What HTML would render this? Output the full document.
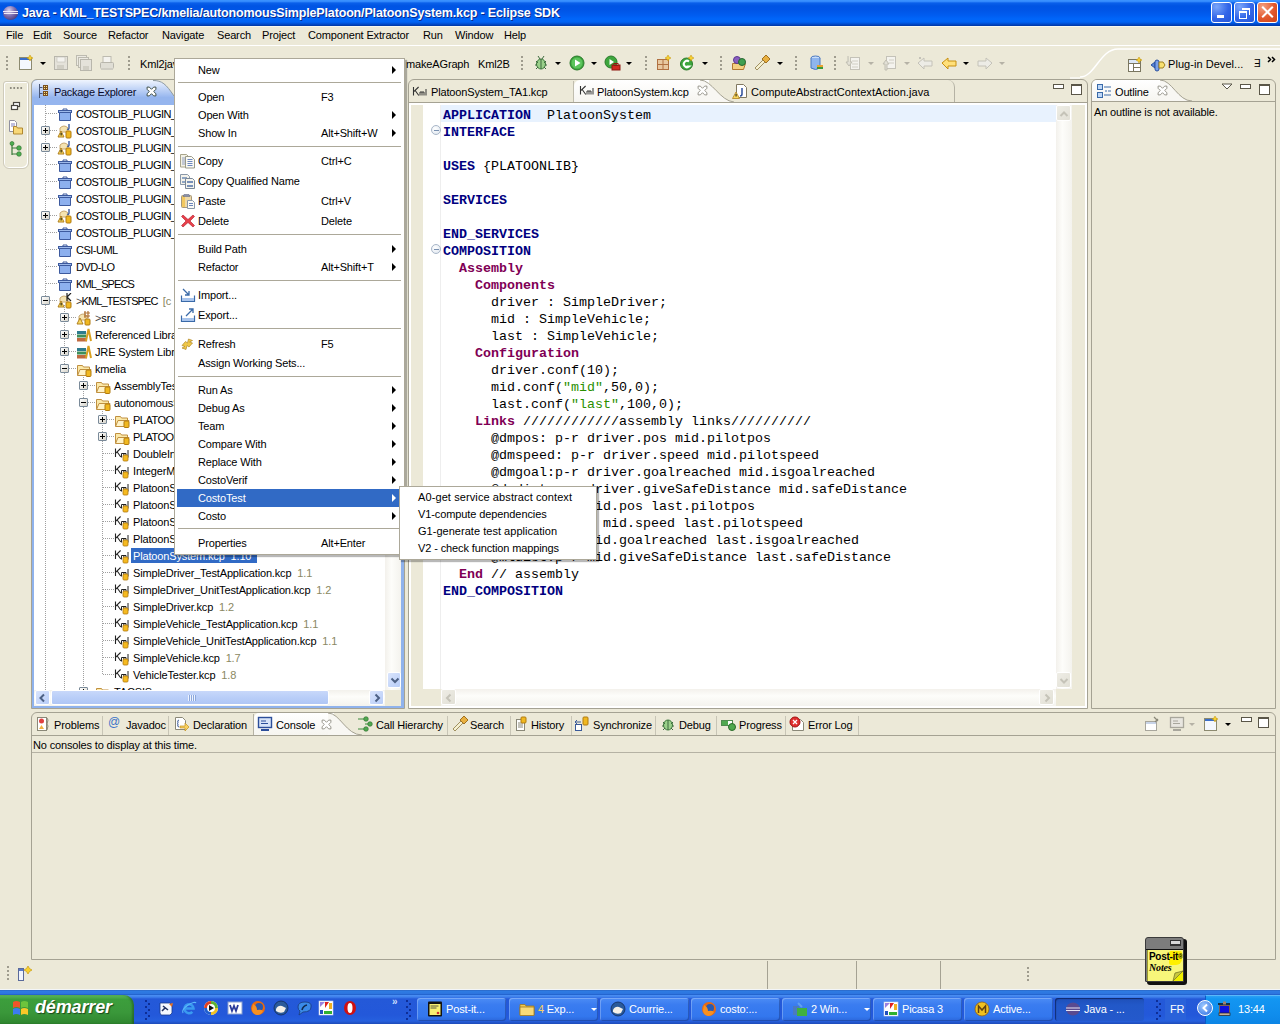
<!DOCTYPE html><html><head><meta charset="utf-8"><style>
*{margin:0;padding:0;box-sizing:border-box}
html,body{width:1280px;height:1024px;overflow:hidden;background:#ECE9D8;font-family:"Liberation Sans",sans-serif;font-size:11px;color:#000;position:relative}
.a{position:absolute}
.t{position:absolute;white-space:nowrap;line-height:13px;letter-spacing:-0.15px}
svg{position:absolute;overflow:visible}
.grip{position:absolute;width:2px;height:15px;background:repeating-linear-gradient(#9F9C8E 0 2px,transparent 2px 4px)}
.dd{position:absolute;width:0;height:0;border-left:3px solid transparent;border-right:3px solid transparent;border-top:3px solid #000}
.ddg{border-top-color:#B5B2A6}
.code{font-family:"Liberation Mono",monospace;font-size:13.33px;line-height:17px;position:absolute;white-space:pre;left:443px}
.kw{color:#00007F;font-weight:bold}
.k2{color:#7F0055;font-weight:bold}
.st{color:#2A8F00}
.menu{position:absolute;background:#fff;border:1px solid #ACA899;box-shadow:2px 2px 1px rgba(0,0,0,.28)}
.sep{position:absolute;height:1px;background:#ACA899}
.arr{position:absolute;width:0;height:0;border-top:4px solid transparent;border-bottom:4px solid transparent;border-left:4px solid #000}
.tb{position:absolute;top:998px;height:23px;width:89px;border-radius:3px;background:linear-gradient(#4C8CF5,#3A7CF0 30%,#3377EE 80%,#2C66DA);box-shadow:inset 1px 1px 0 rgba(255,255,255,.25),inset -1px -1px 0 rgba(0,0,40,.25);color:#fff}
.tb .t{top:5px}
.dots{position:absolute;background-image:radial-gradient(circle,#8F8C80 0.8px,transparent 1px);background-size:2px 2px}
.vd{position:absolute;width:1px;background:repeating-linear-gradient(#A0A0A0 0 1px,transparent 1px 2px)}
.hd{position:absolute;height:1px;background:repeating-linear-gradient(90deg,#A0A0A0 0 1px,transparent 1px 2px)}
.exp{position:absolute;width:9px;height:9px;border:1px solid #7A8A99;border-radius:1px;background:linear-gradient(135deg,#fff,#D6D3C9)}
.exp:before{content:"";position:absolute;left:1px;top:3px;width:5px;height:1px;background:#000}
.exp.p:after{content:"";position:absolute;left:3px;top:1px;width:1px;height:5px;background:#000}
.ver{color:#8A8862;margin-left:3px}
.closex{position:absolute;width:10px;height:10px}
</style></head><body>
<svg width="0" height="0" style="position:absolute"><defs>
<symbol id="ifold" viewBox="0 0 16 16"><rect x="1.5" y="4.5" width="13" height="2" fill="#9DB9EA" stroke="#3D5A9E"/><path d="M2.5 6.5h11v8h-11z" fill="#8DB0EE" stroke="#3D5A9E"/><path d="M6 4.5v-1.5h4v1.5" fill="none" stroke="#3D5A9E"/></symbol>
<symbol id="iproj" viewBox="0 0 16 16"><path d="M3 5 Q7 1 11 5 v4 h-8z" fill="#F5E3B0" stroke="#C8A870"/><path d="M12 1v4q0 2-2 1" fill="none" stroke="#2C4E9A" stroke-width="1.3"/><path d="M1 14 L4 8 L7 14z" fill="#F8D860" stroke="#B08020"/><rect x="3.6" y="10" width="1" height="2.5" fill="#000"/><rect x="9" y="8" width="5" height="7" rx="1" fill="#F0B820" stroke="#B07A10"/></symbol>
<symbol id="iprojk" viewBox="0 0 16 16"><path d="M3 5 Q7 1 11 5 v4 h-8z" fill="#F5E3B0" stroke="#C8A870"/><path d="M10 0v8M10 4l4-4M10 4l4 4" fill="none" stroke="#222" stroke-width="1.2"/><path d="M1 14 L4 8 L7 14z" fill="#F8D860" stroke="#B08020"/><rect x="3.6" y="10" width="1" height="2.5" fill="#000"/><rect x="9" y="9" width="5" height="6" rx="1" fill="#F0B820" stroke="#B07A10"/></symbol>
<symbol id="isrc" viewBox="0 0 16 16"><path d="M3 6 Q7 2 11 6 v4 h-8z" fill="#F5E3B0" stroke="#C8A870"/><path d="M9 1v7M12 1v7M8 3h6M8 6h6" stroke="#B07030" stroke-width="1.2"/><path d="M1 14 L4 8 L7 14z" fill="#F8D860" stroke="#B08020"/><rect x="9" y="9" width="5" height="6" rx="1" fill="#F0B820" stroke="#B07A10"/></symbol>
<symbol id="ilib" viewBox="0 0 16 16"><rect x="1" y="4" width="9" height="3" fill="#2E7C8E"/><rect x="1" y="7.5" width="9" height="3" fill="#3F8F5A"/><rect x="1" y="11" width="10" height="3.5" fill="#C06A40"/><path d="M10 14 L12.5 2 L15 14" fill="none" stroke="#D8A020" stroke-width="2"/></symbol>
<symbol id="iopen" viewBox="0 0 16 16"><path d="M1.5 4.5h5l1 1.5h6v8h-12z" fill="#FBE8A8" stroke="#C09040"/><path d="M1.5 14.5 L4 8.5h11l-2.5 6z" fill="#FFF3C8" stroke="#C09040"/><rect x="10" y="9" width="5" height="6.5" rx="1" fill="#F0B820" stroke="#B07A10"/></symbol>
<symbol id="ikml" viewBox="0 0 16 16"><path d="M1.5 2.5v8.5M1.8 7.2l4.8-4.7M3.2 6l3.6 5" fill="none" stroke="#222" stroke-width="1.1"/><path d="M7.5 11.5V7.5h4.5v4M9.8 7.5v4" fill="none" stroke="#222" stroke-width="1"/><path d="M14 4v7.5" stroke="#222" stroke-width="1"/><rect x="9" y="9" width="5" height="6" rx="1" fill="#F5BA20" stroke="#B07A10" stroke-width=".8"/></symbol>
<symbol id="ikmltab" viewBox="0 0 16 16"><path d="M1.5 3v8.5M1.8 7.7l4.8-4.7M3.2 6.5l3.6 5" fill="none" stroke="#333" stroke-width="1.1"/><path d="M8 11.5V8h4v3.5M10 8v3.5" fill="none" stroke="#333" stroke-width="1"/><path d="M14 5v6.5" stroke="#333" stroke-width="1"/></symbol>
<symbol id="ix" viewBox="0 0 10 10"><path d="M1 1h2l2 2 2-2h2v2l-2 2 2 2v2h-2l-2-2-2 2h-2v-2l2-2-2-2z" fill="#fff" stroke="#8C8A80" stroke-width="0.8"/></symbol>
</defs></svg>
<div class="a" style="left:0;top:0;width:1280px;height:26px;background:linear-gradient(#3D95FF 0,#3289FC 1.5px,#0A60EA 3px,#0054E3 6px,#0056E8 11px,#005CF0 15px,#0066FA 19px,#0063F4 22px,#004CCF 24px,#0036A2 26px)">
<div class="a" style="left:3px;top:6px;width:15px;height:14px;border-radius:50%;background:radial-gradient(circle at 40% 30%,#D6D0EE,#7A6BB0 45%,#3A2C6A 90%)"></div>
<div class="a" style="left:3px;top:11px;width:15px;height:1px;background:#EEEAF8"></div>
<div class="a" style="left:4px;top:13px;width:14px;height:1px;background:#EEEAF8"></div>
<div class="t" style="left:22px;top:5px;color:#fff;font-weight:bold;font-size:12.5px;line-height:17px;text-shadow:1px 1px 0 #0B2A8A">Java - KML_TESTSPEC/kmelia/autonomousSimplePlatoon/PlatoonSystem.kcp - Eclipse SDK</div>
<div class="a" style="left:1211px;top:2px;width:21px;height:21px;border:1px solid #fff;border-radius:3px;background:radial-gradient(circle at 25% 20%,#7AA6FA,#3366E8 55%,#2556D8)"><div class="a" style="left:5px;top:12px;width:7px;height:3px;background:#fff"></div></div>
<div class="a" style="left:1234px;top:2px;width:21px;height:21px;border:1px solid #fff;border-radius:3px;background:radial-gradient(circle at 25% 20%,#7AA6FA,#3366E8 55%,#2556D8)"><div class="a" style="left:4px;top:8px;width:8px;height:8px;border:1px solid #fff;border-top-width:2px"></div><div class="a" style="left:7px;top:5px;width:8px;height:7px;border-top:2px solid #fff;border-right:1px solid #fff"></div></div>
<div class="a" style="left:1257px;top:2px;width:21px;height:21px;border:1px solid #fff;border-radius:3px;background:radial-gradient(circle at 25% 20%,#F2A080,#E2582C 55%,#CC4418)"><div class="a" style="left:2px;top:8px;width:15px;height:2px;background:#fff;transform:rotate(45deg)"></div><div class="a" style="left:2px;top:8px;width:15px;height:2px;background:#fff;transform:rotate(-45deg)"></div></div>
</div>
<div class="a" style="left:0;top:45px;width:1280px;height:1px;background:#fff"></div><div class="a" style="left:0;top:26px;width:1280px;height:1px;background:#F6F8F0"></div>
<div class="t" style="left:6px;top:29px">File</div>
<div class="t" style="left:33px;top:29px">Edit</div>
<div class="t" style="left:63px;top:29px">Source</div>
<div class="t" style="left:108px;top:29px">Refactor</div>
<div class="t" style="left:162px;top:29px">Navigate</div>
<div class="t" style="left:217px;top:29px">Search</div>
<div class="t" style="left:262px;top:29px">Project</div>
<div class="t" style="left:308px;top:29px">Component Extractor</div>
<div class="t" style="left:423px;top:29px">Run</div>
<div class="t" style="left:455px;top:29px">Window</div>
<div class="t" style="left:504px;top:29px">Help</div>
<div class="grip" style="left:6px;top:56px"></div>
<svg style="left:18px;top:55px" width="16" height="16" viewBox="0 0 16 16"><rect x="1.5" y="2.5" width="12" height="12" fill="#F4F8FE" stroke="#8C8A70"/><rect x="2" y="3" width="11" height="2" fill="#3A6EC8"/><path d="M12 0l1 2 2 1-2 1-1 2-1-2-2-1 2-1z" fill="#F8D030" stroke="#C09000" stroke-width=".5"/></svg>
<div class="dd" style="left:40px;top:62px"></div>
<svg style="left:53px;top:55px" width="16" height="16" viewBox="0 0 16 16"><rect x="1.5" y="1.5" width="13" height="13" fill="#E4E2DA" stroke="#B8B6AC"/><rect x="4" y="2" width="8" height="5" fill="#F4F3EF" stroke="#C0BEB4" stroke-width=".6"/><rect x="4" y="10" width="7" height="4" fill="#D0CEC4"/></svg>
<svg style="left:76px;top:55px" width="16" height="16" viewBox="0 0 16 16"><rect x="0.5" y="0.5" width="10" height="10" fill="#ECEAE2" stroke="#BDBBB0"/><rect x="2.5" y="2.5" width="10" height="10" fill="#ECEAE2" stroke="#BDBBB0"/><rect x="4.5" y="4.5" width="11" height="11" fill="#E4E2DA" stroke="#B8B6AC"/><rect x="7" y="11" width="6" height="4" fill="#D0CEC4"/></svg>
<svg style="left:99px;top:55px" width="16" height="16" viewBox="0 0 16 16"><rect x="4" y="1.5" width="8" height="6" fill="#F4F3EF" stroke="#BDBBB0"/><rect x="1.5" y="7.5" width="13" height="6" rx="1" fill="#E0DED5" stroke="#B8B6AC"/><rect x="2" y="13" width="12" height="2" fill="#CFCDC3"/></svg>
<div class="grip" style="left:128px;top:56px"></div>
<div class="t" style="left:140px;top:58px">Kml2java</div>
<div class="t" style="left:406px;top:58px">makeAGraph</div>
<div class="t" style="left:478px;top:58px">Kml2B</div>
<div class="grip" style="left:521px;top:56px"></div>
<svg style="left:533px;top:55px" width="16" height="16" viewBox="0 0 16 16"><ellipse cx="8" cy="9" rx="4.5" ry="5" fill="#9AD08A" stroke="#3E7A3E"/><path d="M8 4v10M3 6l2 2M13 6l-2 2M2 10h2M12 10h2M3 14l2-2M13 14l-2-2M5 1l2 3M11 1l-2 3" stroke="#3E6A3E" stroke-width="1"/></svg>
<div class="dd" style="left:555px;top:62px"></div>
<svg style="left:569px;top:55px" width="16" height="16" viewBox="0 0 16 16"><circle cx="8" cy="8" r="7" fill="#3DA63D" stroke="#2A7A2A"/><circle cx="8" cy="8" r="5.5" fill="#5CC45C"/><path d="M6 4.5 L11.5 8 L6 11.5z" fill="#fff"/></svg>
<div class="dd" style="left:591px;top:62px"></div>
<svg style="left:604px;top:55px" width="16" height="16" viewBox="0 0 16 16"><circle cx="7" cy="7" r="6" fill="#3DA63D" stroke="#2A7A2A"/><path d="M5.5 4 L10 7 L5.5 10z" fill="#fff"/><rect x="8" y="10" width="8" height="5" fill="#D02820" stroke="#901810"/><rect x="10" y="8.5" width="4" height="2" fill="none" stroke="#901810"/></svg>
<div class="dd" style="left:626px;top:62px"></div>
<div class="grip" style="left:645px;top:56px"></div>
<svg style="left:656px;top:55px" width="16" height="16" viewBox="0 0 16 16"><rect x="1.5" y="4.5" width="11" height="10" fill="#E8C8A0" stroke="#B07040"/><path d="M7 4.5v10M1.5 9.5h11" stroke="#B07040"/><path d="M12 0l1 2 2 1-2 1-1 2-1-2-2-1 2-1z" fill="#F8D030" stroke="#C09000" stroke-width=".5"/></svg>
<svg style="left:679px;top:55px" width="16" height="16" viewBox="0 0 16 16"><circle cx="7.5" cy="9" r="6" fill="#3DA63D" stroke="#2A7A2A"/><path d="M10 6.5a3.2 3.2 0 1 0 0 5h-2.5" fill="none" stroke="#fff" stroke-width="2"/><path d="M12 0l1 2 2 1-2 1-1 2-1-2-2-1 2-1z" fill="#F8D030" stroke="#C09000" stroke-width=".5"/></svg>
<div class="dd" style="left:702px;top:62px"></div>
<div class="grip" style="left:720px;top:56px"></div>
<svg style="left:731px;top:55px" width="16" height="16" viewBox="0 0 16 16"><path d="M1.5 8.5h13l-2 6h-11z" fill="#F5D080" stroke="#B07830"/><circle cx="6" cy="5" r="3.5" fill="#8A5EC0" stroke="#5A3A90"/><circle cx="11" cy="7" r="3.5" fill="#3FA050" stroke="#286830"/></svg>
<svg style="left:754px;top:55px" width="16" height="16" viewBox="0 0 16 16"><path d="M3 15 L1 13 L9 5 L11 7z" fill="#F5F0D0" stroke="#A09060"/><path d="M8 4 L12 0 L16 4 L12 8z" fill="#E8B040" stroke="#A07020"/></svg>
<div class="dd" style="left:777px;top:62px"></div>
<div class="grip" style="left:795px;top:56px"></div>
<svg style="left:809px;top:55px" width="16" height="16" viewBox="0 0 16 16"><ellipse cx="6.5" cy="3" rx="4.5" ry="2" fill="#C8DDF8" stroke="#4A78C0"/><path d="M2 3v10q4.5 3 9 0V3" fill="#8FB5EE" stroke="#4A78C0"/><rect x="8" y="10" width="6" height="4" fill="#E8A030"/><rect x="8" y="12" width="6" height="2" fill="#3A9A3A"/></svg>
<div class="grip" style="left:834px;top:56px"></div>
<svg style="left:845px;top:55px" width="16" height="16" viewBox="0 0 16 16"><rect x="5.5" y="2.5" width="9" height="12" fill="#F4F3EE" stroke="#C4C2B8"/><path d="M3 1v6h-2l3 4 3-4h-2" fill="#E2E0D6" stroke="#C0BEB2"/><path d="M7 6h6M7 9h6M7 12h6" stroke="#D0CEC4"/></svg>
<div class="dd ddg" style="left:868px;top:62px"></div>
<svg style="left:881px;top:55px" width="16" height="16" viewBox="0 0 16 16"><rect x="5.5" y="1.5" width="9" height="12" fill="#F4F3EE" stroke="#C4C2B8"/><path d="M4 15v-6h-2l3-4 3 4h-2v6z" fill="#E2E0D6" stroke="#C0BEB2"/><path d="M8 5h5M8 8h5" stroke="#D0CEC4"/></svg>
<div class="dd ddg" style="left:904px;top:62px"></div>
<svg style="left:917px;top:55px" width="16" height="16" viewBox="0 0 16 16"><path d="M1 8l6-5v3h8v5h-8v3z" fill="#EDECE6" stroke="#C4C2B8"/><path d="M2 2l2 2M4 2l-2 2" stroke="#C4C2B8"/></svg>
<svg style="left:941px;top:55px" width="16" height="16" viewBox="0 0 16 16"><path d="M1 8l6-5v3h8v5h-8v3z" fill="#FFE07A" stroke="#C89010"/></svg>
<div class="dd" style="left:963px;top:62px"></div>
<svg style="left:977px;top:55px" width="16" height="16" viewBox="0 0 16 16"><path d="M15 8l-6-5v3h-8v5h8v3z" fill="#EDECE6" stroke="#C4C2B8"/></svg>
<div class="dd ddg" style="left:999px;top:62px"></div>
<svg style="left:1070px;top:46px" width="210" height="34" viewBox="0 0 210 34"><path d="M10 31 C 25 31, 30 3, 48 3 L 210 3" fill="none" stroke="#fff" stroke-width="1.5"/><path d="M0 32 H10" stroke="#fff" stroke-width="1.2"/></svg>
<svg style="left:1127px;top:57px" width="16" height="16" viewBox="0 0 16 16"><rect x="1.5" y="2.5" width="12" height="12" fill="#fff" stroke="#7A7660"/><path d="M1.5 6.5h12M6.5 6.5v8M6.5 10.5h7" stroke="#7A7660"/><rect x="2" y="3" width="11" height="3" fill="#DCE8F8"/><path d="M12 0l1 2 2 1-2 1-1 2-1-2-2-1 2-1z" fill="#F8D030" stroke="#C09000" stroke-width=".5"/></svg>
<svg style="left:1150px;top:57px" width="16" height="16" viewBox="0 0 16 16"><path d="M1 8l4-3v6z" fill="#5A8AD8" stroke="#2A50A0"/><rect x="5" y="3" width="4" height="11" rx="2" fill="#7AA0E8" stroke="#2A50A0"/><path d="M9 5h4l2 3-2 3h-4z" fill="#F8E070" stroke="#A08020"/></svg>
<div class="t" style="left:1168px;top:58px;letter-spacing:0.05px">Plug-in Devel...</div>
<div class="t" style="left:1254px;top:57px;font-size:10px">&#x18E;</div>
<svg style="left:1267px;top:56px" width="10" height="7" viewBox="0 0 10 7"><path d="M1 1l2.5 2.5L1 6M5 1l2.5 2.5L5 6" fill="none" stroke="#000" stroke-width="1.5"/></svg>
<div class="a" style="left:3px;top:81px;width:26px;height:88px;border:1px solid #CFCBBB;border-radius:3px 3px 6px 6px;box-shadow:inset 1px 1px 0 #fff,inset -1px -1px 0 #fff"></div>
<div class="dots" style="left:9px;top:87px;width:14px;height:2px;background-image:radial-gradient(circle,#8F8C80 0.9px,transparent 1px);background-size:3.5px 2px"></div>
<svg style="left:8px;top:99px" width="16" height="16" viewBox="0 0 16 16"><rect x="5.5" y="3.5" width="6" height="4" fill="#fff" stroke="#4A4740" stroke-width="1.2"/><rect x="3.5" y="6.5" width="6" height="4" fill="#fff" stroke="#4A4740" stroke-width="1.2"/></svg>
<svg style="left:8px;top:119px" width="16" height="16" viewBox="0 0 16 16"><path d="M1.5 1.5h5l2 2v9h-7z" fill="#fff" stroke="#9090A0"/><path d="M3 5h4M3 7h4" stroke="#8080C0"/><path d="M5.5 7.5h3l1 1.5h5v6h-9z" fill="#F8D878" stroke="#B08830"/></svg>
<svg style="left:8px;top:141px" width="16" height="16" viewBox="0 0 16 16"><path d="M4 2v12M4 7h6M4 13h6" stroke="#3A7A3A" stroke-width="1.2"/><circle cx="4" cy="2.5" r="2" fill="#4CAF50" stroke="#2A6A2A" stroke-width=".6"/><circle cx="11" cy="7" r="2.3" fill="#4CAF50" stroke="#2A6A2A" stroke-width=".6"/><circle cx="11" cy="13" r="2.3" fill="#4CAF50" stroke="#2A6A2A" stroke-width=".6"/></svg>
<div class="a" style="left:31px;top:79px;width:374px;height:630px;border:1px solid #A5A293;border-radius:6px 6px 0 0;background:#8FB2EC"></div>
<svg style="left:32px;top:80px" width="372" height="25" viewBox="0 0 372 25"><defs><linearGradient id="pg" gradientUnits="userSpaceOnUse" x1="0" y1="0" x2="0" y2="17"><stop offset="0" stop-color="#F0F5FE"/><stop offset="0.5" stop-color="#C4D6F7"/><stop offset="1" stop-color="#98B7EF"/></linearGradient></defs><rect x="120" y="0" width="252" height="17" fill="#ECE9D8"/><path d="M0 25V6Q0 0 6 0H121C130 0 134 4 142 16L143 17H372V25z" fill="url(#pg)"/><path d="M121 0.5C130 0.5 134 4 142 16" fill="none" stroke="#8E9AA0" stroke-width="1"/><rect x="0" y="17" width="372" height="8" fill="#95B5EE"/></svg>
<svg style="left:37px;top:83px" width="16" height="16" viewBox="0 0 16 16"><path d="M2.5 1v14M2.5 4.5h3M2.5 10.5h3" stroke="#4A5878" stroke-width="1"/><rect x="6" y="2" width="5" height="5" fill="#7A5020"/><rect x="6" y="8" width="5" height="5" fill="#7A5020"/><path d="M7 3h1v1h-1zM9 3h1v1h-1zM7 5h1v1h-1zM9 5h1v1h-1zM7 9h1v1h-1zM9 9h1v1h-1zM7 11h1v1h-1zM9 11h1v1h-1z" fill="#FFE890"/></svg>
<div class="t" style="left:54px;top:86px;color:#0A0A2A;letter-spacing:-0.3px">Package Explorer</div>
<svg style="left:146px;top:86px" width="11" height="11" viewBox="0 0 10 10"><path d="M1 1h2l2 2 2-2h2v2l-2 2 2 2v2h-2l-2-2-2 2h-2v-2l2-2-2-2z" fill="#fff" stroke="#3E4E48" stroke-width="0.9"/></svg>
<div class="a" style="left:34px;top:105px;width:351px;height:585px;background:#fff"></div>
<div class="a" style="left:34px;top:105px;width:367px;height:601px;background:#fff;z-index:-1"></div>
<div class="a" style="left:385px;top:105px;width:16px;height:585px;background:linear-gradient(90deg,#F3F1EC,#FDFDFA 40%,#F4F3EE)"></div>
<div class="a" style="left:387px;top:672px;width:14px;height:16px;border-radius:2px;border:1px solid #fff;background:linear-gradient(135deg,#D9E4FC,#B8CDF8)"><svg style="left:2px;top:4px" width="10" height="7" viewBox="0 0 10 7"><path d="M1.5 1.5l3.5 3.5 3.5-3.5" fill="none" stroke="#4D6185" stroke-width="2"/></svg></div>
<div class="a" style="left:34px;top:690px;width:351px;height:16px;background:linear-gradient(#F3F1EC,#FDFDFA 40%,#F4F3EE)"></div>
<div class="a" style="left:385px;top:690px;width:16px;height:16px;background:#ECE9D8"></div>
<div class="a" style="left:35px;top:690px;width:15px;height:15px;border-radius:2px;border:1px solid #fff;background:linear-gradient(135deg,#D9E4FC,#B8CDF8)"><svg style="left:3px;top:2px" width="7" height="10" viewBox="0 0 7 10"><path d="M5 1.5l-3.5 3.5 3.5 3.5" fill="none" stroke="#4D6185" stroke-width="2"/></svg></div>
<div class="a" style="left:51px;top:690px;width:278px;height:15px;border-radius:2px;border:1px solid #fff;background:linear-gradient(#C8D8FA,#B9CEF8 50%,#AFC6F5)"><div class="a" style="left:136px;top:4px;width:8px;height:6px;background:repeating-linear-gradient(90deg,#EEF3FE 0 1px,#8CA8DC 1px 2px)"></div></div>
<div class="a" style="left:369px;top:690px;width:15px;height:15px;border-radius:2px;border:1px solid #fff;background:linear-gradient(135deg,#D9E4FC,#B8CDF8)"><svg style="left:4px;top:2px" width="7" height="10" viewBox="0 0 7 10"><path d="M1.5 1.5l3.5 3.5-3.5 3.5" fill="none" stroke="#4D6185" stroke-width="2"/></svg></div>
<div class="a" style="left:34px;top:105px;width:351px;height:585px;overflow:hidden">
<div class="vd" style="left:11px;top:0px;height:585px"></div>
<div class="vd" style="left:30px;top:200px;height:385px"></div>
<div class="vd" style="left:49px;top:268px;height:317px"></div>
<div class="vd" style="left:68px;top:302px;height:268px"></div>
<div class="hd" style="left:12px;top:8px;width:11px"></div>
<svg style="left:23px;top:1px" width="16" height="16"><use href="#ifold"/></svg>
<div class="t" style="left:42px;top:3px;letter-spacing:-0.5px">COSTOLIB_PLUGIN_ACTIONS</div>
<div class="hd" style="left:16px;top:25px;width:7px"></div>
<div class="exp p" style="left:7px;top:21px"></div>
<svg style="left:23px;top:18px" width="16" height="16"><use href="#iproj"/></svg>
<div class="t" style="left:42px;top:20px;letter-spacing:-0.5px">COSTOLIB_PLUGIN_AST</div>
<div class="hd" style="left:16px;top:42px;width:7px"></div>
<div class="exp p" style="left:7px;top:38px"></div>
<svg style="left:23px;top:35px" width="16" height="16"><use href="#iproj"/></svg>
<div class="t" style="left:42px;top:37px;letter-spacing:-0.5px">COSTOLIB_PLUGIN_CORE</div>
<div class="hd" style="left:12px;top:59px;width:11px"></div>
<svg style="left:23px;top:52px" width="16" height="16"><use href="#ifold"/></svg>
<div class="t" style="left:42px;top:54px;letter-spacing:-0.5px">COSTOLIB_PLUGIN_DOC</div>
<div class="hd" style="left:12px;top:76px;width:11px"></div>
<svg style="left:23px;top:69px" width="16" height="16"><use href="#ifold"/></svg>
<div class="t" style="left:42px;top:71px;letter-spacing:-0.5px">COSTOLIB_PLUGIN_FEATURE</div>
<div class="hd" style="left:12px;top:93px;width:11px"></div>
<svg style="left:23px;top:86px" width="16" height="16"><use href="#ifold"/></svg>
<div class="t" style="left:42px;top:88px;letter-spacing:-0.5px">COSTOLIB_PLUGIN_HELP</div>
<div class="hd" style="left:16px;top:110px;width:7px"></div>
<div class="exp p" style="left:7px;top:106px"></div>
<svg style="left:23px;top:103px" width="16" height="16"><use href="#iproj"/></svg>
<div class="t" style="left:42px;top:105px;letter-spacing:-0.5px">COSTOLIB_PLUGIN_UI</div>
<div class="hd" style="left:12px;top:127px;width:11px"></div>
<svg style="left:23px;top:120px" width="16" height="16"><use href="#ifold"/></svg>
<div class="t" style="left:42px;top:122px;letter-spacing:-0.5px">COSTOLIB_PLUGIN_UPDATE</div>
<div class="hd" style="left:12px;top:144px;width:11px"></div>
<svg style="left:23px;top:137px" width="16" height="16"><use href="#ifold"/></svg>
<div class="t" style="left:42px;top:139px;letter-spacing:-0.5px">CSI-UML</div>
<div class="hd" style="left:12px;top:161px;width:11px"></div>
<svg style="left:23px;top:154px" width="16" height="16"><use href="#ifold"/></svg>
<div class="t" style="left:42px;top:156px;letter-spacing:-0.5px">DVD-LO</div>
<div class="hd" style="left:12px;top:178px;width:11px"></div>
<svg style="left:23px;top:171px" width="16" height="16"><use href="#ifold"/></svg>
<div class="t" style="left:42px;top:173px;letter-spacing:-0.9px">KML_SPECS</div>
<div class="hd" style="left:16px;top:195px;width:7px"></div>
<div class="exp " style="left:7px;top:191px"></div>
<svg style="left:23px;top:188px" width="16" height="16"><use href="#iprojk"/></svg>
<div class="t" style="left:42px;top:190px;letter-spacing:-0.9px"><span style="color:#444">&gt;</span>KML_TESTSPEC <span class="ver" style="letter-spacing:0">[c</span></div>
<div class="hd" style="left:35px;top:212px;width:7px"></div>
<div class="exp p" style="left:26px;top:208px"></div>
<svg style="left:42px;top:205px" width="16" height="16"><use href="#isrc"/></svg>
<div class="t" style="left:61px;top:207px"><span style="color:#444">&gt;</span>src</div>
<div class="hd" style="left:35px;top:229px;width:7px"></div>
<div class="exp p" style="left:26px;top:225px"></div>
<svg style="left:42px;top:222px" width="16" height="16"><use href="#ilib"/></svg>
<div class="t" style="left:61px;top:224px">Referenced Libraries</div>
<div class="hd" style="left:35px;top:246px;width:7px"></div>
<div class="exp p" style="left:26px;top:242px"></div>
<svg style="left:42px;top:239px" width="16" height="16"><use href="#ilib"/></svg>
<div class="t" style="left:61px;top:241px">JRE System Library</div>
<div class="hd" style="left:35px;top:263px;width:7px"></div>
<div class="exp " style="left:26px;top:259px"></div>
<svg style="left:42px;top:256px" width="16" height="16"><use href="#iopen"/></svg>
<div class="t" style="left:61px;top:258px">kmelia</div>
<div class="hd" style="left:54px;top:280px;width:7px"></div>
<div class="exp p" style="left:45px;top:276px"></div>
<svg style="left:61px;top:273px" width="16" height="16"><use href="#iopen"/></svg>
<div class="t" style="left:80px;top:275px">AssemblyTests</div>
<div class="hd" style="left:54px;top:297px;width:7px"></div>
<div class="exp " style="left:45px;top:293px"></div>
<svg style="left:61px;top:290px" width="16" height="16"><use href="#iopen"/></svg>
<div class="t" style="left:80px;top:292px">autonomousSimplePlatoon</div>
<div class="hd" style="left:73px;top:314px;width:7px"></div>
<div class="exp p" style="left:64px;top:310px"></div>
<svg style="left:80px;top:307px" width="16" height="16"><use href="#iopen"/></svg>
<div class="t" style="left:99px;top:309px;letter-spacing:-0.5px">PLATOON_A</div>
<div class="hd" style="left:73px;top:331px;width:7px"></div>
<div class="exp p" style="left:64px;top:327px"></div>
<svg style="left:80px;top:324px" width="16" height="16"><use href="#iopen"/></svg>
<div class="t" style="left:99px;top:326px;letter-spacing:-0.5px">PLATOON_B</div>
<div class="hd" style="left:69px;top:348px;width:11px"></div>
<svg style="left:80px;top:341px" width="16" height="16"><use href="#ikml"/></svg>
<div class="t" style="left:99px;top:343px">DoubleInt.kcp</div>
<div class="hd" style="left:69px;top:365px;width:11px"></div>
<svg style="left:80px;top:358px" width="16" height="16"><use href="#ikml"/></svg>
<div class="t" style="left:99px;top:360px">IntegerMath.kcp</div>
<div class="hd" style="left:69px;top:382px;width:11px"></div>
<svg style="left:80px;top:375px" width="16" height="16"><use href="#ikml"/></svg>
<div class="t" style="left:99px;top:377px">PlatoonSystem_TA1.kcp</div>
<div class="hd" style="left:69px;top:399px;width:11px"></div>
<svg style="left:80px;top:392px" width="16" height="16"><use href="#ikml"/></svg>
<div class="t" style="left:99px;top:394px">PlatoonSystem_TA2.kcp</div>
<div class="hd" style="left:69px;top:416px;width:11px"></div>
<svg style="left:80px;top:409px" width="16" height="16"><use href="#ikml"/></svg>
<div class="t" style="left:99px;top:411px">PlatoonSystem_TA3.kcp</div>
<div class="hd" style="left:69px;top:433px;width:11px"></div>
<svg style="left:80px;top:426px" width="16" height="16"><use href="#ikml"/></svg>
<div class="t" style="left:99px;top:428px">PlatoonSystem_TA4.kcp</div>
<div class="hd" style="left:69px;top:450px;width:11px"></div>
<svg style="left:80px;top:443px" width="16" height="16"><use href="#ikml"/></svg>
<div class="a" style="left:97px;top:443px;width:126px;height:15px;background:#316AC5"></div>
<div class="t" style="left:99px;top:445px;color:#fff">PlatoonSystem.kcp <span style="margin-left:3px">1.10</span></div>
<div class="hd" style="left:69px;top:467px;width:11px"></div>
<svg style="left:80px;top:460px" width="16" height="16"><use href="#ikml"/></svg>
<div class="t" style="left:99px;top:462px">SimpleDriver_TestApplication.kcp <span class="ver">1.1</span></div>
<div class="hd" style="left:69px;top:484px;width:11px"></div>
<svg style="left:80px;top:477px" width="16" height="16"><use href="#ikml"/></svg>
<div class="t" style="left:99px;top:479px">SimpleDriver_UnitTestApplication.kcp <span class="ver">1.2</span></div>
<div class="hd" style="left:69px;top:501px;width:11px"></div>
<svg style="left:80px;top:494px" width="16" height="16"><use href="#ikml"/></svg>
<div class="t" style="left:99px;top:496px">SimpleDriver.kcp <span class="ver">1.2</span></div>
<div class="hd" style="left:69px;top:518px;width:11px"></div>
<svg style="left:80px;top:511px" width="16" height="16"><use href="#ikml"/></svg>
<div class="t" style="left:99px;top:513px">SimpleVehicle_TestApplication.kcp <span class="ver">1.1</span></div>
<div class="hd" style="left:69px;top:535px;width:11px"></div>
<svg style="left:80px;top:528px" width="16" height="16"><use href="#ikml"/></svg>
<div class="t" style="left:99px;top:530px">SimpleVehicle_UnitTestApplication.kcp <span class="ver">1.1</span></div>
<div class="hd" style="left:69px;top:552px;width:11px"></div>
<svg style="left:80px;top:545px" width="16" height="16"><use href="#ikml"/></svg>
<div class="t" style="left:99px;top:547px">SimpleVehicle.kcp <span class="ver">1.7</span></div>
<div class="hd" style="left:69px;top:569px;width:11px"></div>
<svg style="left:80px;top:562px" width="16" height="16"><use href="#ikml"/></svg>
<div class="t" style="left:99px;top:564px">VehicleTester.kcp <span class="ver">1.8</span></div>
<div class="hd" style="left:54px;top:586px;width:7px"></div>
<div class="exp p" style="left:45px;top:582px"></div>
<svg style="left:61px;top:579px" width="16" height="16"><use href="#iopen"/></svg>
<div class="t" style="left:80px;top:581px">TACSIS</div>
</div>
<div class="a" style="left:408px;top:79px;width:680px;height:630px;border:1px solid #A5A293;border-radius:6px 6px 0 0;background:#ECE9D8"></div>
<div class="a" style="left:408px;top:102px;width:680px;height:1px;background:#A5A293"></div>
<div class="a" style="left:409px;top:103px;width:678px;height:605px;background:#fff"></div>
<div class="a" style="left:411px;top:105px;width:12px;height:584px;background:#ECE9D8"></div>
<div class="a" style="left:440px;top:105px;width:1px;height:584px;background:#EEEEEE"></div>
<div class="a" style="left:441px;top:105px;width:615px;height:17px;background:#E8F2FE"></div>
<div class="a" style="left:1056px;top:105px;width:16px;height:584px;background:linear-gradient(90deg,#F3F1EC,#FDFDFA 40%,#F4F3EE)"></div>
<div class="a" style="left:1072px;top:105px;width:13px;height:601px;background:#ECE9D8"></div>
<div class="a" style="left:411px;top:689px;width:30px;height:17px;background:#ECE9D8"></div>
<div class="a" style="left:441px;top:689px;width:615px;height:17px;background:linear-gradient(#F3F1EC,#FDFDFA 40%,#F4F3EE)"></div>
<div class="a" style="left:1056px;top:689px;width:16px;height:17px;background:#ECE9D8"></div>
<div class="a" style="left:1056px;top:105px;width:15px;height:16px;border-radius:2px;border:1px solid #fff;background:linear-gradient(135deg,#EEEDE5,#E2E0D6)"><svg style="left:2px;top:3px" width="10" height="10" viewBox="0 0 10 10"><path d="M1.5 7l3.5-3.5 3.5 3.5" fill="none" stroke="#C5C3B8" stroke-width="2"/></svg></div>
<div class="a" style="left:1056px;top:672px;width:15px;height:16px;border-radius:2px;border:1px solid #fff;background:linear-gradient(135deg,#EEEDE5,#E2E0D6)"><svg style="left:2px;top:3px" width="10" height="10" viewBox="0 0 10 10"><path d="M1.5 3l3.5 3.5 3.5-3.5" fill="none" stroke="#C5C3B8" stroke-width="2"/></svg></div>
<div class="a" style="left:441px;top:689px;width:15px;height:16px;border-radius:2px;border:1px solid #fff;background:linear-gradient(135deg,#EEEDE5,#E2E0D6)"><svg style="left:2px;top:3px" width="10" height="10" viewBox="0 0 10 10"><path d="M6.5 1.5l-3.5 3.5 3.5 3.5" fill="none" stroke="#C5C3B8" stroke-width="2"/></svg></div>
<div class="a" style="left:1039px;top:689px;width:15px;height:16px;border-radius:2px;border:1px solid #fff;background:linear-gradient(135deg,#EEEDE5,#E2E0D6)"><svg style="left:2px;top:3px" width="10" height="10" viewBox="0 0 10 10"><path d="M3.5 1.5l3.5 3.5-3.5 3.5" fill="none" stroke="#C5C3B8" stroke-width="2"/></svg></div>
<div class="a" style="left:431px;top:125px;width:10px;height:10px;border-radius:50%;border:1px solid #A8B6C8;background:radial-gradient(circle at 40% 35%,#fff,#DCE4EE)"><div class="a" style="left:2px;top:3.5px;width:5px;height:1px;background:#7890B0"></div></div>
<div class="a" style="left:431px;top:244px;width:10px;height:10px;border-radius:50%;border:1px solid #A8B6C8;background:radial-gradient(circle at 40% 35%,#fff,#DCE4EE)"><div class="a" style="left:2px;top:3.5px;width:5px;height:1px;background:#7890B0"></div></div>
<div class="a" style="left:574px;top:80px;width:135px;height:22px;border-radius:6px 0 0 0;background:linear-gradient(#fff,#F6F5F0)"></div>
<svg style="left:700px;top:79px" width="40" height="24" viewBox="0 0 40 24"><path d="M0 1 C 12 1, 20 22, 34 23 L0 23z" fill="#F8F7F3"/><path d="M0 1 C 12 1, 20 22, 34 23" fill="none" stroke="#A5A293"/></svg>
<div class="a" style="left:573px;top:81px;width:1px;height:21px;background:#C0BDAE"></div>
<svg style="left:412px;top:84px" width="16" height="16"><use href="#ikmltab"/></svg>
<div class="t" style="left:431px;top:86px">PlatoonSystem_TA1.kcp</div>
<svg style="left:579px;top:83px" width="16" height="16"><use href="#ikmltab"/></svg>
<div class="t" style="left:597px;top:86px">PlatoonSystem.kcp</div>
<svg style="left:697px;top:85px" width="11" height="11" viewBox="0 0 10 10"><use href="#ix"/></svg>
<svg style="left:732px;top:83px" width="16" height="16" viewBox="0 0 16 16"><path d="M4.5 1.5h7l3 3v10h-10z" fill="#fff" stroke="#807860"/><path d="M10 5v6q0 2-2 2" fill="none" stroke="#2C4E9A" stroke-width="1.5"/><path d="M0.5 15.5 L4 9 L7.5 15.5z" fill="#F8D860" stroke="#B08020" stroke-width=".8"/><rect x="3.6" y="11" width=".9" height="2.5" fill="#000"/></svg>
<div class="t" style="left:751px;top:86px;letter-spacing:0.05px">ComputeAbstractContextAction.java</div>
<div class="a" style="left:940px;top:80px;width:15px;height:22px;border-top-right-radius:7px;border-right:1px solid #B5B2A4;border-top:0"></div>
<div class="a" style="left:1053px;top:84px;width:11px;height:5px;border:1px solid #5A5648;background:#fff"></div>
<div class="a" style="left:1071px;top:84px;width:11px;height:11px;border:1px solid #5A5648;border-top-width:2px;background:#fff"></div>
<div class="code" style="top:107px"><span class="kw">APPLICATION</span>  PlatoonSystem
<span class="kw">INTERFACE</span>

<span class="kw">USES</span> {PLATOONLIB}

<span class="kw">SERVICES</span>

<span class="kw">END_SERVICES</span>
<span class="kw">COMPOSITION</span>
  <span class="k2">Assembly</span>
    <span class="k2">Components</span>
      driver : SimpleDriver;
      mid : SimpleVehicle;
      last : SimpleVehicle;
    <span class="k2">Configuration</span>
      driver.conf(10);
      mid.conf(<span class="st">"mid"</span>,50,0);
      last.conf(<span class="st">"last"</span>,100,0);
    <span class="k2">Links</span> ////////////assembly links//////////
      @dmpos: p-r driver.pos mid.pilotpos
      @dmspeed: p-r driver.speed mid.pilotspeed
      @dmgoal:p-r driver.goalreached mid.isgoalreached
      @dmdist:p-r driver.giveSafeDistance mid.safeDistance
      @mlpos: p-r mid.pos last.pilotpos
      @mlspeed: p-r mid.speed last.pilotspeed
      @mlgoal:p-r mid.goalreached last.isgoalreached
      @mldist:p-r mid.giveSafeDistance last.safeDistance
  <span class="k2">End</span> // assembly
<span class="kw">END_COMPOSITION</span></div>
<div class="a" style="left:1091px;top:79px;width:185px;height:630px;border:1px solid #A5A293;border-radius:6px 6px 0 0;background:#ECE9D8"></div>
<div class="a" style="left:1091px;top:101px;width:185px;height:1px;background:#A5A293"></div>
<div class="a" style="left:1092px;top:80px;width:72px;height:21px;border-radius:5px 0 0 0;background:linear-gradient(#fff,#F6F5F0)"></div>
<svg style="left:1160px;top:79px" width="40" height="23" viewBox="0 0 40 23"><path d="M0 1 C 12 1, 18 22, 32 22 L0 22z" fill="#F8F7F3"/><path d="M0 1 C 12 1, 18 22, 32 22" fill="none" stroke="#A5A293"/></svg>
<svg style="left:1096px;top:83px" width="16" height="16" viewBox="0 0 16 16"><rect x="1.5" y="1.5" width="5" height="5" fill="#BFD8F8" stroke="#3A6AA8"/><rect x="1.5" y="9.5" width="5" height="5" fill="#BFD8F8" stroke="#3A6AA8"/><path d="M8 4h7M9 8h2M12 8h3M8 12h7" stroke="#3A6AA8"/></svg>
<div class="t" style="left:1115px;top:86px">Outline</div>
<svg style="left:1157px;top:85px" width="11" height="11" viewBox="0 0 10 10"><use href="#ix"/></svg>
<svg style="left:1221px;top:83px" width="12" height="7" viewBox="0 0 12 7"><path d="M1 1h10l-5 5z" fill="#fff" stroke="#5A5648"/></svg>
<div class="a" style="left:1240px;top:84px;width:11px;height:5px;border:1px solid #5A5648;background:#fff"></div>
<div class="a" style="left:1259px;top:84px;width:11px;height:11px;border:1px solid #5A5648;border-top-width:2px;background:#fff"></div>
<div class="t" style="left:1094px;top:106px">An outline is not available.</div>
<div class="a" style="left:31px;top:712px;width:1245px;height:248px;border:1px solid #A5A293;border-radius:6px 6px 0 0;background:#ECE9D8"></div>
<div class="a" style="left:31px;top:735px;width:1245px;height:1px;background:#A5A293"></div>
<div class="a" style="left:32px;top:752px;width:1243px;height:1px;background:#B5B2A4"></div>
<div class="a" style="left:102px;top:716px;width:1px;height:19px;background:#C8C5B6"></div>
<div class="a" style="left:168px;top:716px;width:1px;height:19px;background:#C8C5B6"></div>
<div class="a" style="left:253px;top:716px;width:1px;height:19px;background:#C8C5B6"></div>
<div class="a" style="left:447px;top:716px;width:1px;height:19px;background:#C8C5B6"></div>
<div class="a" style="left:510px;top:716px;width:1px;height:19px;background:#C8C5B6"></div>
<div class="a" style="left:571px;top:716px;width:1px;height:19px;background:#C8C5B6"></div>
<div class="a" style="left:655px;top:716px;width:1px;height:19px;background:#C8C5B6"></div>
<div class="a" style="left:716px;top:716px;width:1px;height:19px;background:#C8C5B6"></div>
<div class="a" style="left:785px;top:716px;width:1px;height:19px;background:#C8C5B6"></div>
<div class="a" style="left:858px;top:716px;width:1px;height:19px;background:#C8C5B6"></div>
<div class="a" style="left:254px;top:713px;width:80px;height:22px;border-radius:5px 0 0 0;background:linear-gradient(#fff,#F6F5F0)"></div>
<svg style="left:328px;top:712px" width="40" height="24" viewBox="0 0 40 24"><path d="M0 1 C 12 1, 18 23, 34 23 L0 23z" fill="#F8F7F3"/><path d="M0 1 C 12 1, 18 23, 34 23" fill="none" stroke="#A5A293"/></svg>
<div class="a" style="left:253px;top:714px;width:1px;height:21px;background:#B5B2A4"></div>
<svg style="left:36px;top:716px" width="16" height="16" viewBox="0 0 16 16"><rect x="1.5" y="1.5" width="9" height="13" fill="#fff" stroke="#8A8878"/><circle cx="5.5" cy="5" r="2.5" fill="#E04040"/><path d="M3 13l2.5-4 2.5 4z" fill="#F0B040"/><path d="M11 2q2 1 0 6q2 1 0 6" fill="none" stroke="#8A8878"/></svg>
<div class="t" style="left:54px;top:719px">Problems</div>
<div class="t" style="left:108px;top:716px;color:#3C74C8;font-size:12px">@</div>
<div class="t" style="left:126px;top:719px">Javadoc</div>
<svg style="left:174px;top:716px" width="16" height="16" viewBox="0 0 16 16"><path d="M1.5 1.5h7l3 3v9h-10z" fill="#fff" stroke="#8A8878"/><path d="M5 4q-2 0-1 3-1 1 0 1 -1 3 1 3" fill="none" stroke="#3A5A9A"/><path d="M6 10h5v-3l4 4-4 4v-3h-5z" fill="#F8D060" stroke="#C09020" stroke-width=".7"/></svg>
<div class="t" style="left:193px;top:719px">Declaration</div>
<svg style="left:257px;top:716px" width="16" height="16" viewBox="0 0 16 16"><rect x="1.5" y="1.5" width="13" height="10" fill="#D8E4F8" stroke="#2C4E9A" stroke-width="1.4"/><path d="M4 5h5M4 7.5h7" stroke="#2C4E9A"/><rect x="4" y="13" width="8" height="2" fill="#2C4E9A"/></svg>
<div class="t" style="left:276px;top:719px">Console</div>
<svg style="left:321px;top:719px" width="11" height="11" viewBox="0 0 10 10"><use href="#ix"/></svg>
<svg style="left:357px;top:716px" width="16" height="16" viewBox="0 0 16 16"><path d="M1 3h7M1 13h7M8 8h4" stroke="#3A8A3A"/><circle cx="9" cy="3" r="2.3" fill="#50A850" stroke="#2A6A2A" stroke-width=".6"/><circle cx="13" cy="8" r="2.3" fill="#50A850" stroke="#2A6A2A" stroke-width=".6"/><circle cx="9" cy="13" r="2.3" fill="#50A850" stroke="#2A6A2A" stroke-width=".6"/></svg>
<div class="t" style="left:376px;top:719px">Call Hierarchy</div>
<svg style="left:452px;top:716px" width="16" height="16" viewBox="0 0 16 16"><path d="M3 15 L1 13 L9 5 L11 7z" fill="#F5F0D0" stroke="#A09060"/><path d="M8 4 L12 0 L16 4 L12 8z" fill="#E8B040" stroke="#A07020"/></svg>
<div class="t" style="left:470px;top:719px">Search</div>
<svg style="left:514px;top:716px" width="16" height="16" viewBox="0 0 16 16"><rect x="2.5" y="3.5" width="8" height="11" fill="#fff" stroke="#8A8878"/><path d="M4 7h5M4 9h5M4 11h5" stroke="#8A8878"/><rect x="7" y="1" width="5" height="6" rx="1" fill="#F0B820" stroke="#B07A10"/></svg>
<div class="t" style="left:531px;top:719px">History</div>
<svg style="left:574px;top:716px" width="16" height="16" viewBox="0 0 16 16"><rect x="1.5" y="8.5" width="6" height="6" fill="#fff" stroke="#3A5A9A"/><path d="M1 6h6M3 4l-2 2 2 2" fill="none" stroke="#3A5A9A"/><rect x="9" y="1" width="5" height="8" rx="1" fill="#F0B820" stroke="#B07A10"/></svg>
<div class="t" style="left:593px;top:719px">Synchronize</div>
<svg style="left:660px;top:716px" width="16" height="16" viewBox="0 0 16 16"><ellipse cx="8" cy="9" rx="4.5" ry="5" fill="#9AD08A" stroke="#3E7A3E"/><path d="M8 4v10M3 6l2 2M13 6l-2 2M2 10h2M12 10h2M3 14l2-2M13 14l-2-2" stroke="#3E6A3E"/></svg>
<div class="t" style="left:679px;top:719px">Debug</div>
<svg style="left:720px;top:716px" width="16" height="16" viewBox="0 0 16 16"><rect x="1.5" y="4.5" width="11" height="5" fill="#fff" stroke="#508A50"/><rect x="2" y="5" width="6" height="4" fill="#50A850"/><circle cx="12" cy="11" r="3.5" fill="#50A850" stroke="#2A6A2A"/></svg>
<div class="t" style="left:739px;top:719px">Progress</div>
<svg style="left:789px;top:716px" width="16" height="16" viewBox="0 0 16 16"><path d="M3.5 3.5h8l3 3v8h-11z" fill="#fff" stroke="#8A8878"/><circle cx="6" cy="6" r="5" fill="#E03030" stroke="#A01010"/><path d="M4 4l4 4M8 4l-4 4" stroke="#fff" stroke-width="1.3"/></svg>
<div class="t" style="left:808px;top:719px">Error Log</div>
<svg style="left:1144px;top:716px" width="16" height="16" viewBox="0 0 16 16"><rect x="1.5" y="5.5" width="11" height="9" fill="#fff" stroke="#A8A69C"/><rect x="2" y="6" width="10" height="2" fill="#C8D4E8"/><path d="M10 1l4 4M11 6l3-3" stroke="#8A8878" stroke-width="1.2"/></svg>
<svg style="left:1169px;top:716px" width="16" height="16" viewBox="0 0 16 16"><rect x="1.5" y="1.5" width="13" height="10" fill="#E8E6E0" stroke="#A8A69C" stroke-width="1.3"/><path d="M4 5h5M4 7.5h7" stroke="#A8A69C"/><rect x="4" y="13" width="8" height="2" fill="#A8A69C"/></svg>
<div class="dd ddg" style="left:1189px;top:723px"></div>
<svg style="left:1203px;top:716px" width="16" height="16" viewBox="0 0 16 16"><rect x="1.5" y="2.5" width="12" height="12" fill="#F4F8FE" stroke="#8C8A70"/><rect x="2" y="3" width="11" height="2" fill="#3A6EC8"/><path d="M12 0l1 2 2 1-2 1-1 2-1-2-2-1 2-1z" fill="#F8D030" stroke="#C09000" stroke-width=".5"/></svg>
<div class="dd" style="left:1225px;top:723px"></div>
<div class="a" style="left:1241px;top:717px;width:11px;height:5px;border:1px solid #5A5648;background:#fff"></div>
<div class="a" style="left:1258px;top:717px;width:11px;height:11px;border:1px solid #5A5648;border-top-width:2px;background:#fff"></div>
<div class="t" style="left:33px;top:739px">No consoles to display at this time.</div>
<div class="grip" style="left:7px;top:966px"></div>
<svg style="left:17px;top:966px" width="16" height="16" viewBox="0 0 16 16"><rect x="1.5" y="2.5" width="5" height="12" fill="#F0F4FC" stroke="#5A6A9A"/><rect x="2" y="3" width="4" height="2" fill="#5A7AC8"/><path d="M11 0l1.5 2.5 2.5 1.5-2.5 1.5-1.5 2.5-1.5-2.5-2.5-1.5 2.5-1.5z" fill="#F8D030" stroke="#C09000" stroke-width=".6"/></svg>
<div class="a" style="left:767px;top:961px;width:1px;height:28px;background:#A5A293"></div>
<div class="a" style="left:856px;top:961px;width:1px;height:28px;background:#A5A293"></div>
<div class="a" style="left:940px;top:961px;width:1px;height:28px;background:#A5A293"></div>
<div class="grip" style="left:1027px;top:967px;height:14px"></div>
<div class="a" style="left:1147px;top:939px;width:40px;height:46px;background:#111;border-radius:3px"></div>
<div class="a" style="left:1145px;top:937px;width:39px;height:45px;background:#7C7C7C;border:1px solid #3A3A3A;border-radius:3px 3px 1px 1px"></div>
<div class="a" style="left:1146px;top:949px;width:37px;height:1px;background:#111"></div>
<div class="a" style="left:1147px;top:950px;width:36px;height:31px;background:#F8F67A;border-left:1px solid #9A9A30"></div>
<div class="a" style="left:1170px;top:940px;width:11px;height:6px;background:#D8D8D8;border:1px solid #333;border-width:1px 1px 2px 1px"></div>
<div class="a" style="left:1169px;top:951px;width:13px;height:14px;background:#FFF000;border-radius:2px 2px 6px 2px"></div>
<div class="t" style="left:1149px;top:951px;font-weight:bold;font-size:10px;line-height:11px;letter-spacing:-0.3px">Post-it<span style="font-size:7px;vertical-align:top">&#174;</span></div>
<div class="t" style="left:1149px;top:962px;font-family:'Liberation Serif',serif;font-weight:bold;font-style:italic;font-size:10px;line-height:11px">Notes</div>
<svg style="left:1172px;top:970px" width="12" height="12" viewBox="0 0 12 12"><path d="M11 1L1 11h10z" fill="#F0F000"/><path d="M11 1L1 11L3 3z" fill="#C8C840" stroke="#6A6A20" stroke-width=".7"/></svg>
<div class="a" style="left:0;top:989px;width:1280px;height:1px;background:#F2F5F8"></div><div class="a" style="left:0;top:990px;width:1280px;height:34px;background:linear-gradient(#2A5FB8 0,#2E7CE4 1px,#2D74DE 4px,#2262CC 4.6px,#4A8EF2 5.2px,#3E80EC 7px,#2459D8 9px,#2358DA 25px,#2660DE 31px,#1E4AB8 34px)"></div>
<div class="a" style="left:0;top:995px;width:134px;height:29px;border-radius:0 10px 0 0;background:linear-gradient(#5DBA5D 0,#3C9E3C 15%,#3A983A 60%,#2F862F 100%);box-shadow:inset -2px 0 2px rgba(0,0,0,.25)"></div>
<svg style="left:11px;top:999px" width="19" height="19" viewBox="0 0 19 19"><path d="M2 3q3-2 7 0v6q-4-2-7 0z" fill="#F0542A"/><path d="M10 3q3-2 7 0v6q-4-2-7 0z" fill="#6CC43C"/><path d="M2 10q3-2 7 0v6q-4-2-7 0z" fill="#3C7CF0"/><path d="M10 10q3-2 7 0v6q-4-2-7 0z" fill="#F8C828"/></svg>
<div class="t" style="left:35px;top:997px;color:#fff;font-weight:bold;font-style:italic;font-size:18px;line-height:20px;text-shadow:1px 1px 1px #1A4A1A">démarrer</div>
<svg style="left:145px;top:1000px" width="6" height="21"><rect x="0" y="0" width="2" height="2" fill="#0E2E96"/><rect x="3" y="3" width="2" height="2" fill="#0E2E96"/><rect x="0" y="6" width="2" height="2" fill="#0E2E96"/><rect x="3" y="9" width="2" height="2" fill="#0E2E96"/><rect x="0" y="12" width="2" height="2" fill="#0E2E96"/><rect x="3" y="15" width="2" height="2" fill="#0E2E96"/><rect x="0" y="18" width="2" height="2" fill="#0E2E96"/></svg>
<svg style="left:158px;top:1000px" width="16" height="16" viewBox="0 0 16 16"><path d="M2 3h10l2 2v8l-2 2H3l-1-2z" fill="#F4F8FF" stroke="#1A3A8A" stroke-width=".8"/><path d="M4 11l3-3M5 6l5 4" stroke="#203060" stroke-width="1.6"/><path d="M11 4l4-1-1 4" fill="#E87020"/></svg>
<svg style="left:181px;top:1000px" width="16" height="16" viewBox="0 0 16 16"><path d="M4 8.5h8.5a4.5 4.5 0 1 0-1.2 3.3" fill="none" stroke="#3A9AF0" stroke-width="2.6"/><path d="M2 13q-2-3 5-8 7-4 8-2" fill="none" stroke="#5AB8FA" stroke-width="1.2"/></svg>
<svg style="left:203px;top:1000px" width="16" height="16" viewBox="0 0 16 16"><circle cx="8" cy="8" r="7" fill="#fff"/><path d="M8 1a7 7 0 0 1 7 7h-3a4 4 0 0 0-4-4z" fill="#60B030"/><path d="M15 8a7 7 0 0 1-7 7v-3a4 4 0 0 0 4-4z" fill="#F0C020"/><path d="M8 15a7 7 0 0 1-7-7h3a4 4 0 0 0 4 4z" fill="#2060D0"/><path d="M1 8a7 7 0 0 1 7-7v3a4 4 0 0 0-4 4z" fill="#E04020"/><path d="M6 5l5 3-5 3z" fill="#111"/></svg>
<svg style="left:227px;top:1000px" width="16" height="16" viewBox="0 0 16 16"><rect x="1" y="2" width="14" height="12" fill="#fff" stroke="#8AA0D0"/><path d="M3 5l2 6 2-5 2 5 2-6" fill="none" stroke="#2A3A9A" stroke-width="1.8"/></svg>
<svg style="left:250px;top:1000px" width="16" height="16" viewBox="0 0 16 16"><circle cx="8" cy="8" r="7" fill="#E86A10"/><circle cx="9" cy="7" r="4" fill="#2A5AB0"/><path d="M3 4q4 2 4 6 4-1 6 1-2 4-6 4-5-1-5-6z" fill="#F89020"/></svg>
<svg style="left:273px;top:1000px" width="16" height="16" viewBox="0 0 16 16"><circle cx="8" cy="8" r="7" fill="#2A5A9A" stroke="#102A5A" stroke-width=".8"/><path d="M3 9q2-4 6-3l4 2-2 4q-4 2-8-1z" fill="#F4F0E8"/></svg>
<svg style="left:296px;top:1000px" width="16" height="16" viewBox="0 0 16 16"><path d="M2 7q0-5 7-5t6 5q0 5-8 5l-4 3 1-4q-2-1-2-4z" fill="#3A8AE8" stroke="#1A3A7A" stroke-width=".8"/><path d="M6 10q1-4 5-5" fill="none" stroke="#102A50" stroke-width="1.6"/></svg>
<svg style="left:318px;top:1000px" width="16" height="16" viewBox="0 0 16 16"><rect x="1" y="1" width="14" height="14" fill="#fff" stroke="#C8D0E8" stroke-width=".6"/><path d="M2 2h5l-5 5z" fill="#9A80E0"/><path d="M7 2h4l-4 6z" fill="#E02020"/><path d="M11 3h3v6h-3z" fill="#F0B020"/><path d="M6 11h8v3h-8z" fill="#30B030"/><path d="M2 10h3v4h-3z" fill="#2050C0"/></svg>
<svg style="left:342px;top:1000px" width="16" height="16" viewBox="0 0 16 16"><ellipse cx="8" cy="8" rx="6" ry="7" fill="#D01010"/><ellipse cx="8" cy="8" rx="2.5" ry="5" fill="#fff"/></svg>
<div class="t" style="left:392px;top:995px;color:#C8DCFC;font-size:10px;font-weight:bold;letter-spacing:-1px">&#187;</div>
<svg style="left:406px;top:1000px" width="6" height="21"><rect x="0" y="0" width="2" height="2" fill="#0E2E96"/><rect x="3" y="3" width="2" height="2" fill="#0E2E96"/><rect x="0" y="6" width="2" height="2" fill="#0E2E96"/><rect x="3" y="9" width="2" height="2" fill="#0E2E96"/><rect x="0" y="12" width="2" height="2" fill="#0E2E96"/><rect x="3" y="15" width="2" height="2" fill="#0E2E96"/><rect x="0" y="18" width="2" height="2" fill="#0E2E96"/></svg>
<div class="tb" style="left:417px;"><svg style="left:10px;top:3px" width="16" height="16" viewBox="0 0 16 16"><rect x="1" y="0.5" width="14" height="15" rx="1" fill="#111"/><rect x="2.5" y="3" width="11" height="11" fill="#F8F070"/><path d="M3.5 5h8M3.5 7h6" stroke="#333" stroke-width=".8"/><circle cx="11" cy="12" r="1.3" fill="#D03030"/></svg><div class="t" style="left:29px">Post-it...</div></div>
<div class="tb" style="left:509px;"><svg style="left:10px;top:3px" width="16" height="16" viewBox="0 0 16 16"><path d="M1 3.5h5l1 1.5h8v9H1z" fill="#F0C850" stroke="#A07820" stroke-width=".8"/><path d="M1 6h14v8.5H1z" fill="#F8DA78" stroke="#A07820" stroke-width=".8"/></svg><div class="t" style="left:29px"><span style="color:#F8D060">4</span> Exp...</div></div>
<div class="tb" style="left:600px;"><svg style="left:10px;top:3px" width="16" height="16" viewBox="0 0 16 16"><circle cx="8" cy="8" r="7" fill="#2A5A9A" stroke="#102A5A" stroke-width=".8"/><path d="M3 9q2-4 6-3l4 2-2 4q-4 2-8-1z" fill="#F4F0E8"/></svg><div class="t" style="left:29px">Courrie...</div></div>
<div class="tb" style="left:691px;"><svg style="left:10px;top:3px" width="16" height="16" viewBox="0 0 16 16"><circle cx="8" cy="8" r="7" fill="#E86A10"/><circle cx="9" cy="7" r="4" fill="#2A5AB0"/><path d="M3 4q4 2 4 6 4-1 6 1-2 4-6 4-5-1-5-6z" fill="#F89020"/></svg><div class="t" style="left:29px">costo:...</div></div>
<div class="tb" style="left:782px;"><svg style="left:10px;top:3px" width="16" height="16" viewBox="0 0 16 16"><rect x="1" y="5" width="6" height="9" fill="#4A7AC0"/><rect x="5" y="7" width="10" height="8" fill="#40B040"/><path d="M6 2l4 4" stroke="#60A0F0" stroke-width="2"/></svg><div class="t" style="left:29px">2 Win...</div></div>
<div class="tb" style="left:873px;"><svg style="left:10px;top:3px" width="16" height="16" viewBox="0 0 16 16"><rect x="1" y="1" width="14" height="14" fill="#fff" stroke="#C8D0E8" stroke-width=".6"/><path d="M2 2h5l-5 5z" fill="#9A80E0"/><path d="M7 2h4l-4 6z" fill="#E02020"/><path d="M11 3h3v6h-3z" fill="#F0B020"/><path d="M6 11h8v3h-8z" fill="#30B030"/><path d="M2 10h3v4h-3z" fill="#2050C0"/></svg><div class="t" style="left:29px">Picasa 3</div></div>
<div class="tb" style="left:964px;"><svg style="left:10px;top:3px" width="16" height="16" viewBox="0 0 16 16"><circle cx="8" cy="8" r="7" fill="#F0C020" stroke="#906010" stroke-width=".8"/><path d="M4.5 12V5l3.5 4 3.5-4v7" fill="none" stroke="#604010" stroke-width="1.5"/></svg><div class="t" style="left:29px">Active...</div></div>
<div class="tb" style="left:1055px;background:linear-gradient(#1E4FB8,#2258C8 30%,#2459CC);box-shadow:inset 1px 1px 1px rgba(0,0,30,.5)"><svg style="left:10px;top:3px" width="16" height="16" viewBox="0 0 16 16"><ellipse cx="8" cy="8" rx="7" ry="6.5" fill="#5A4A90"/><path d="M1 7h14M1 9.5h14" stroke="#E8E4F4" stroke-width="1.2"/></svg><div class="t" style="left:29px">Java - ...</div></div>
<div class="dd" style="left:591px;top:1008px;border-top-color:#fff"></div>
<div class="dd" style="left:864px;top:1008px;border-top-color:#fff"></div>
<svg style="left:1156px;top:1000px" width="6" height="21"><rect x="0" y="0" width="2" height="2" fill="#0E2E96"/><rect x="3" y="3" width="2" height="2" fill="#0E2E96"/><rect x="0" y="6" width="2" height="2" fill="#0E2E96"/><rect x="3" y="9" width="2" height="2" fill="#0E2E96"/><rect x="0" y="12" width="2" height="2" fill="#0E2E96"/><rect x="3" y="15" width="2" height="2" fill="#0E2E96"/><rect x="0" y="18" width="2" height="2" fill="#0E2E96"/></svg>
<div class="a" style="left:1165px;top:998px;width:21px;height:22px;background:#2A62DA"></div>
<div class="t" style="left:1170px;top:1003px;color:#fff">FR</div>
<div class="a" style="left:1205px;top:995px;width:75px;height:29px;background:linear-gradient(#2AA0F6 0,#1396F2 3px,#0F8CEC 20px,#0C84E4 29px);border-left:1px solid #0A5CC8;border-top:1px solid #5AB8FA"></div>
<div class="a" style="left:1197px;top:1000px;width:16px;height:16px;border-radius:50%;background:radial-gradient(circle at 40% 35%,#9CC8FF,#2A6CE0);border:1px solid #fff"><svg style="left:3px;top:2px" width="8" height="10" viewBox="0 0 8 10"><path d="M6 1.5l-3.5 3.5 3.5 3.5" fill="none" stroke="#fff" stroke-width="2"/></svg></div>
<svg style="left:1217px;top:1001px" width="16" height="16" viewBox="0 0 16 16"><path d="M1 3h12" stroke="#111" stroke-width="1.5"/><rect x="6" y="0.5" width="3" height="3" fill="#A08070"/><rect x="2.5" y="4.5" width="10" height="8" fill="#1010E0" stroke="#806050"/><rect x="2" y="12" width="11" height="2.5" fill="#C8B098" stroke="#222" stroke-width=".7"/></svg>
<div class="t" style="left:1238px;top:1003px;color:#fff">13:44</div>
<div class="menu" style="left:174px;top:58px;width:231px;height:497px"></div>
<div class="t" style="left:198px;top:64px;color:#000">New</div>
<div class="arr" style="left:392px;top:66px;border-left-color:#000"></div>
<div class="sep" style="left:178px;top:82px;width:223px"></div>
<div class="t" style="left:198px;top:91px;color:#000">Open</div>
<div class="t" style="left:321px;top:91px;color:#000">F3</div>
<div class="t" style="left:198px;top:109px;color:#000">Open With</div>
<div class="arr" style="left:392px;top:111px;border-left-color:#000"></div>
<div class="t" style="left:198px;top:127px;color:#000">Show In</div>
<div class="t" style="left:321px;top:127px;color:#000">Alt+Shift+W</div>
<div class="arr" style="left:392px;top:129px;border-left-color:#000"></div>
<div class="sep" style="left:178px;top:146px;width:223px"></div>
<div class="t" style="left:198px;top:155px;color:#000">Copy</div>
<div class="t" style="left:321px;top:155px;color:#000">Ctrl+C</div>
<svg style="left:180px;top:153px" width="16" height="16" viewBox="0 0 16 16"><path d="M0.5 1.5h6l2 2v10.5h-8z" fill="#F4F2E6" stroke="#A8A48A"/><path d="M2 5h3M2 7h3M2 9h3M2 11h3" stroke="#7A8CB8" stroke-width=".8"/><path d="M5.5 3.5h6l3 3v8.5h-9z" fill="#FAFAF6" stroke="#9A9A88"/><path d="M7.5 6.5h5M7.5 8.5h5M7.5 10.5h5M7.5 12.5h5" stroke="#5A78B8" stroke-width=".9"/></svg>
<div class="t" style="left:198px;top:175px;color:#000">Copy Qualified Name</div>
<svg style="left:180px;top:173px" width="16" height="16" viewBox="0 0 16 16"><path d="M0.5 1.5h7l2 2v8h-9z" fill="#F4F2EA" stroke="#8A98A8"/><rect x="2" y="4" width="5" height="2" fill="#8FA6C4"/><rect x="2" y="8" width="5" height="2" fill="#8FA6C4"/><path d="M5.5 5.5h7l2 2v8h-9z" fill="#F4F4EE" stroke="#7A8898"/><rect x="7" y="8" width="6" height="2" fill="#7890B8"/><rect x="7" y="12" width="6" height="2" fill="#7890B8"/></svg>
<div class="t" style="left:198px;top:195px;color:#000">Paste</div>
<div class="t" style="left:321px;top:195px;color:#000">Ctrl+V</div>
<svg style="left:180px;top:193px" width="16" height="16" viewBox="0 0 16 16"><rect x="1.5" y="2.5" width="10" height="12" rx="1" fill="#EED9A8" stroke="#A89878"/><rect x="2" y="3" width="3" height="11" fill="#F2C860"/><path d="M4 1.5h5l1 2h-7z" fill="#8A90A8" stroke="#6A7088" stroke-width=".6"/><path d="M7.5 7.5h5l2 2v6h-7z" fill="#FAFAF6" stroke="#8A98A8"/><path d="M9 10.5h4M9 12.5h4" stroke="#5A78B8" stroke-width=".9"/></svg>
<div class="t" style="left:198px;top:215px;color:#000">Delete</div>
<div class="t" style="left:321px;top:215px;color:#000">Delete</div>
<svg style="left:180px;top:213px" width="16" height="16" viewBox="0 0 16 16"><path d="M3 2l5 4.5 5-4.5 1.5 1.5-4.5 4.5 4.5 4.5-1.5 1.5-5-4.5-5 4.5-1.5-1.5 4.5-4.5-4.5-4.5z" fill="#E8404A" stroke="#B01828" stroke-width=".6"/></svg>
<div class="sep" style="left:178px;top:234px;width:223px"></div>
<div class="t" style="left:198px;top:243px;color:#000">Build Path</div>
<div class="arr" style="left:392px;top:245px;border-left-color:#000"></div>
<div class="t" style="left:198px;top:261px;color:#000">Refactor</div>
<div class="t" style="left:321px;top:261px;color:#000">Alt+Shift+T</div>
<div class="arr" style="left:392px;top:263px;border-left-color:#000"></div>
<div class="sep" style="left:178px;top:280px;width:223px"></div>
<div class="t" style="left:198px;top:289px;color:#000">Import...</div>
<svg style="left:180px;top:287px" width="16" height="16" viewBox="0 0 16 16"><path d="M1.5 8.5v6h13v-6" fill="none" stroke="#3A6AA8" stroke-width="1.2"/><rect x="2" y="11" width="12" height="3" fill="#A8C4EC"/><path d="M3 2l6 6M9 4v4h-4" fill="none" stroke="#3A6AA8" stroke-width="1.3"/></svg>
<div class="t" style="left:198px;top:309px;color:#000">Export...</div>
<svg style="left:180px;top:307px" width="16" height="16" viewBox="0 0 16 16"><path d="M1.5 8.5v6h13v-6" fill="none" stroke="#3A6AA8" stroke-width="1.2"/><rect x="2" y="11" width="12" height="3" fill="#A8C4EC"/><path d="M6 9l7-7M9 2h4v4" fill="none" stroke="#3A6AA8" stroke-width="1.3"/></svg>
<div class="sep" style="left:178px;top:328px;width:223px"></div>
<div class="t" style="left:198px;top:338px;color:#000">Refresh</div>
<div class="t" style="left:321px;top:338px;color:#000">F5</div>
<svg style="left:180px;top:336px" width="16" height="16" viewBox="0 0 16 16"><path d="M2 9.5l3.5-4 2 1.5 1-4 4 1.5-3 1.5 3 1-3.5 4-2-1.5-1 4-4-1.5 3-1.5z" fill="#F0C848" stroke="#B08828" stroke-width=".7"/></svg>
<div class="t" style="left:198px;top:357px;color:#000">Assign Working Sets...</div>
<div class="sep" style="left:178px;top:376px;width:223px"></div>
<div class="t" style="left:198px;top:384px;color:#000">Run As</div>
<div class="arr" style="left:392px;top:386px;border-left-color:#000"></div>
<div class="t" style="left:198px;top:402px;color:#000">Debug As</div>
<div class="arr" style="left:392px;top:404px;border-left-color:#000"></div>
<div class="t" style="left:198px;top:420px;color:#000">Team</div>
<div class="arr" style="left:392px;top:422px;border-left-color:#000"></div>
<div class="t" style="left:198px;top:438px;color:#000">Compare With</div>
<div class="arr" style="left:392px;top:440px;border-left-color:#000"></div>
<div class="t" style="left:198px;top:456px;color:#000">Replace With</div>
<div class="arr" style="left:392px;top:458px;border-left-color:#000"></div>
<div class="t" style="left:198px;top:474px;color:#000">CostoVerif</div>
<div class="arr" style="left:392px;top:476px;border-left-color:#000"></div>
<div class="a" style="left:177px;top:489px;width:224px;height:18px;background:#316AC5"></div>
<div class="t" style="left:198px;top:492px;color:#fff">CostoTest</div>
<div class="arr" style="left:392px;top:494px;border-left-color:#fff"></div>
<div class="t" style="left:198px;top:510px;color:#000">Costo</div>
<div class="arr" style="left:392px;top:512px;border-left-color:#000"></div>
<div class="sep" style="left:178px;top:528px;width:223px"></div>
<div class="t" style="left:198px;top:537px;color:#000">Properties</div>
<div class="t" style="left:321px;top:537px;color:#000">Alt+Enter</div>
<div class="menu" style="left:399px;top:486px;width:198px;height:74px"></div>
<div class="t" style="left:418px;top:491px;letter-spacing:0.1px">A0-get service abstract context</div>
<div class="t" style="left:418px;top:508px;letter-spacing:-0.1px">V1-compute dependencies</div>
<div class="t" style="left:418px;top:525px;letter-spacing:0.03px">G1-generate test application</div>
<div class="t" style="left:418px;top:542px;letter-spacing:-0.12px">V2 - check function mappings</div>
</body></html>
